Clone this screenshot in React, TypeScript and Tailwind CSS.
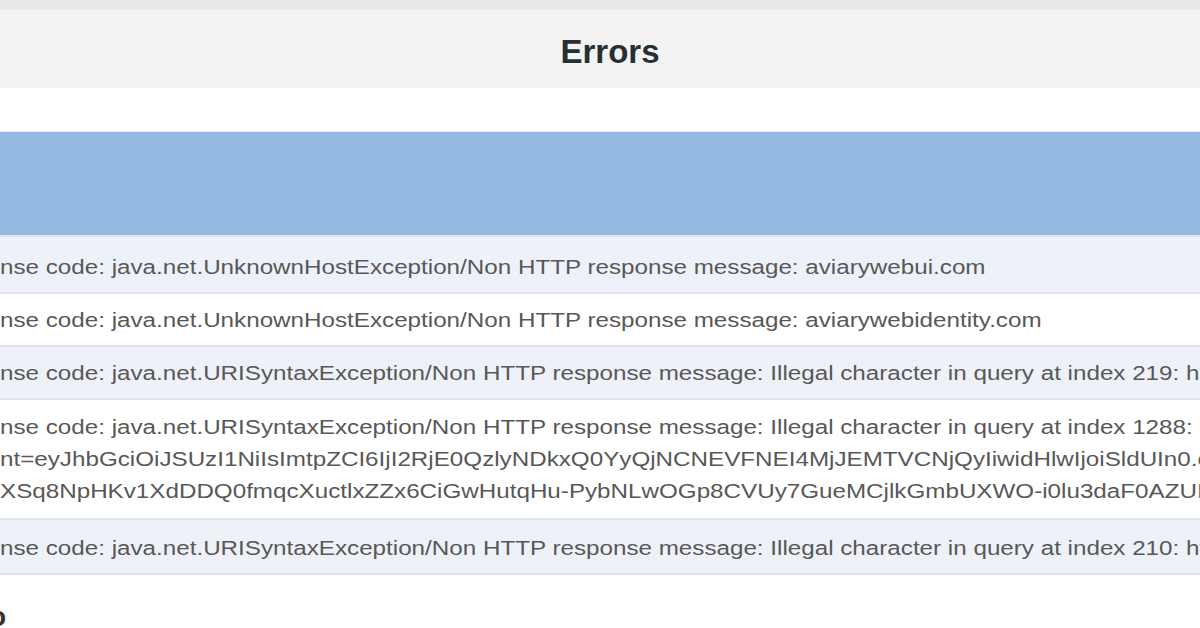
import React from "react";

const rows: { bg: string; pad: string; lines: string[] }[] = [
  {
    bg: "bg-[#edf2fa]",
    pad: "pt-[14px] pb-[9px]",
    lines: ["nse code: java.net.UnknownHostException/Non HTTP response message: aviarywebui.com"],
  },
  {
    bg: "bg-white",
    pad: "pt-[10px] pb-[9px]",
    lines: ["nse code: java.net.UnknownHostException/Non HTTP response message: aviarywebidentity.com"],
  },
  {
    bg: "bg-[#eef2f8]",
    pad: "pt-[10px] pb-[9px]",
    lines: [
      "nse code: java.net.URISyntaxException/Non HTTP response message: Illegal character in query at index 219: https://aviarywebidentity.com",
    ],
  },
  {
    bg: "bg-white",
    pad: "pt-[11px] pb-[11px]",
    lines: [
      "nse code: java.net.URISyntaxException/Non HTTP response message: Illegal character in query at index 1288: https://aviarywebui.com/?",
      "nt=eyJhbGciOiJSUzI1NiIsImtpZCI6IjI2RjE0QzlyNDkxQ0YyQjNCNEVFNEI4MjJEMTVCNjQyIiwidHlwIjoiSldUIn0.eyJuYmYiOjE2",
      "XSq8NpHKv1XdDDQ0fmqcXuctlxZZx6CiGwHutqHu-PybNLwOGp8CVUy7GueMCjlkGmbUXWO-i0lu3daF0AZUIsxP4Wv",
    ],
  },
  {
    bg: "bg-[#eef2f8]",
    pad: "pt-[12px] pb-[9px]",
    lines: [
      "nse code: java.net.URISyntaxException/Non HTTP response message: Illegal character in query at index 210: https://aviarywebidentity.com",
    ],
  },
];

export default function App() {
  return (
    <div
      className="w-[1200px] h-[628px] overflow-hidden bg-white flex flex-col"
      style={{ fontFamily: '"Liberation Sans", Arial, sans-serif' }}
    >
      <div className="h-[10px] bg-[#e9e9eb] shrink-0" />
      <div className="h-[78px] bg-[#f3f3f3] shrink-0 flex items-center justify-center">
        <h1 className="text-[33px] leading-none font-bold text-[#263034] pl-[20px] pt-[4px]">Errors</h1>
      </div>
      <div className="h-[44px] bg-white shrink-0 border-b border-[#e6eef8]" />
      <div className="h-[105px] bg-[#93b9e3] shrink-0 border-b-2 border-[#dfe6ee]" />
      <div className="flex flex-col shrink-0">
        {rows.map((r, i) => (
          <div key={i} className={`${r.bg} ${r.pad} border-b-2 border-[#e2e4e8] flex flex-col`}>
            {r.lines.map((l, j) => (
              <div
                key={j}
                className="whitespace-nowrap overflow-hidden text-[20px] leading-[32px] text-[#585858] origin-left scale-x-[1.21]"
              >
                {l}
              </div>
            ))}
          </div>
        ))}
      </div>
      <div className="pt-[28px] text-[28px] font-bold text-[#333] leading-none -ml-[11px]">o</div>
    </div>
  );
}
